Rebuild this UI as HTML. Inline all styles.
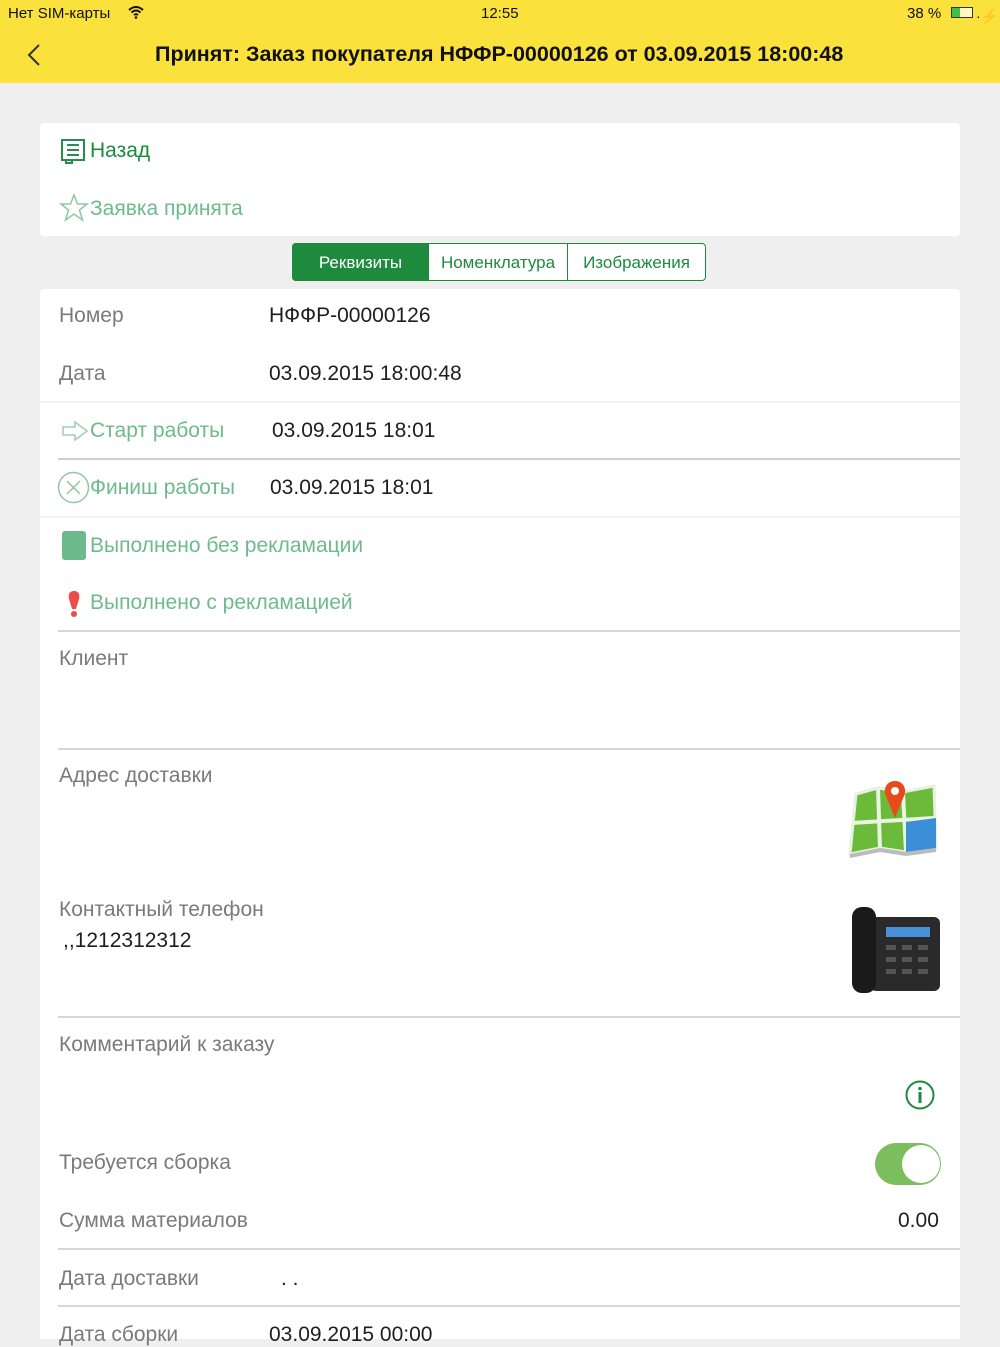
<!DOCTYPE html>
<html><head><meta charset="utf-8"><style>
*{margin:0;padding:0;box-sizing:border-box}
body{width:1000px;height:1334px;overflow:hidden;background:#efefef;font-family:"Liberation Sans","Noto Sans CJK SC",sans-serif;position:relative}
.a{position:absolute;white-space:nowrap;font-size:21px;line-height:24px}
.l{color:#7a7a7a}
.v{color:#1e1e1e}
.g{color:#6dbb8c}
.ln{position:absolute;left:58px;width:902px;height:2px;background:#d6d6d6}
</style></head><body>
<div style="position:absolute;left:0;top:0;width:1000px;height:83px;background:#fbe13c"></div>
<div class="a" style="left:8px;top:4px;font-size:15px;line-height:20px;color:#111">Нет SIM-карты</div>
<svg style="position:absolute;left:128px;top:6px" width="16" height="13" viewBox="0 0 16 13"><path d="M1 4Q8 -2 15 4M3.5 6.5Q8 2.5 12.5 6.5M6 9Q8 7.5 10 9" stroke="#111" stroke-width="2" fill="none"/><circle cx="8" cy="11.5" r="1.3" fill="#111"/></svg>
<div class="a" style="left:481px;top:4px;font-size:15px;line-height:20px;color:#111">12:55</div>
<div class="a" style="left:907px;top:4px;font-size:15px;line-height:20px;color:#111">38 %</div>
<div style="position:absolute;left:951px;top:7px;width:22px;height:11px;border:1px solid #333;background:#fff8c0"><div style="width:8px;height:9px;background:#3cc04a"></div></div>
<div class="a" style="left:976px;top:4px;font-size:14px;color:#111">·⚡</div>
<svg style="position:absolute;left:27px;top:44px" width="14" height="22" viewBox="0 0 14 22"><path d="M12 1L2 11L12 21" stroke="#333" stroke-width="2" fill="none"/></svg>
<div class="a" style="left:155px;top:42px;font-size:21.5px;font-weight:bold;color:#111">Принят: Заказ покупателя НФФР-00000126 от 03.09.2015 18:00:48</div>

<div style="position:absolute;left:40px;top:123px;width:920px;height:113px;background:#fff;border-radius:4px"></div>
<svg style="position:absolute;left:60px;top:138px" width="26" height="26" viewBox="0 0 26 26"><rect x="2" y="2" width="22" height="20" fill="none" stroke="#2f8a52" stroke-width="2"/><path d="M7 7h12M7 12h12M7 17h12M6 22v3h6v-3" stroke="#2f8a52" stroke-width="2" fill="none"/></svg>
<div class="a" style="left:90px;top:139px;color:#1d8a3e">Назад</div>
<svg style="position:absolute;left:59px;top:193px" width="30" height="30" viewBox="0 0 30 30"><path d="M15 2L18.5 11H28L20.5 17L23.5 27L15 21L6.5 27L9.5 17L2 11H11.5Z" fill="none" stroke="#8fc7a4" stroke-width="1.5"/></svg>
<div class="a g" style="left:90px;top:197px">Заявка принята</div>

<div style="position:absolute;left:292px;top:243px;width:414px;height:38px;border:1px solid #1d8a3e;border-radius:4px;background:#fff"></div>
<div style="position:absolute;left:292px;top:243px;width:137px;height:38px;background:#1d8a3e;border-radius:4px 0 0 4px"></div>
<div style="position:absolute;left:567px;top:243px;width:1px;height:38px;background:#1d8a3e"></div>
<div class="a" style="left:292px;width:137px;text-align:center;top:251px;font-size:17px;color:#fff">Реквизиты</div>
<div class="a" style="left:429px;width:138px;text-align:center;top:251px;font-size:17px;color:#1d8a3e">Номенклатура</div>
<div class="a" style="left:567px;width:139px;text-align:center;top:251px;font-size:17px;color:#1d8a3e">Изображения</div>

<div style="position:absolute;left:40px;top:289px;width:920px;height:1050px;background:#fff;border-radius:4px 4px 0 0"></div>
<div style="position:absolute;left:40px;top:401px;width:920px;height:2px;background:#f2f2f2"></div>
<div class="a l" style="left:59px;top:304px">Номер</div>
<div class="a v" style="left:269px;top:304px">НФФР-00000126</div>
<div class="a l" style="left:59px;top:362px">Дата</div>
<div class="a v" style="left:269px;top:362px">03.09.2015 18:00:48</div>

<svg style="position:absolute;left:61px;top:420px" width="28" height="22" viewBox="0 0 28 22"><path d="M2 7H14V2L26 11L14 20V15H2Z" fill="none" stroke="#9fd0b0" stroke-width="1.5"/></svg>
<div class="a g" style="left:90px;top:419px">Старт работы</div>
<div class="a v" style="left:272px;top:419px">03.09.2015 18:01</div>
<div class="ln" style="top:458px;background:#cfcfcf"></div>
<svg style="position:absolute;left:57px;top:471px" width="33" height="33" viewBox="0 0 33 33"><circle cx="16.5" cy="16.5" r="15" fill="none" stroke="#8fc7a4" stroke-width="1.5"/><path d="M10 10L23 23M23 10L10 23" stroke="#8fc7a4" stroke-width="1.5"/></svg>
<div class="a g" style="left:90px;top:476px">Финиш работы</div>
<div class="a v" style="left:270px;top:476px">03.09.2015 18:01</div>
<div style="position:absolute;left:40px;top:516px;width:920px;height:2px;background:#f4f4f4"></div>

<div style="position:absolute;left:62px;top:531px;width:24px;height:29px;background:#6dbb8c;border-radius:3px"></div>
<div class="a g" style="left:90px;top:534px">Выполнено без рекламации</div>
<svg style="position:absolute;left:66px;top:590px" width="16" height="28" viewBox="0 0 16 28"><path d="M8 1C3 1 2 5 3 9L6 19H10L13 9C14 5 13 1 8 1Z" fill="#ee4b4b"/><circle cx="8" cy="24" r="3" fill="#ee4b4b"/></svg>
<div class="a g" style="left:90px;top:591px">Выполнено с рекламацией</div>
<div class="ln" style="top:630px"></div>
<div class="a l" style="left:59px;top:647px">Клиент</div>
<div class="ln" style="top:748px"></div>
<div class="a l" style="left:59px;top:764px">Адрес доставки</div>
<svg style="position:absolute;left:848px;top:778px" width="90" height="80" viewBox="0 0 90 80"><path d="M8 16L30 10L55 14L86 8L88 70L58 74L32 70L2 76Z" fill="#6cba3a" stroke="#e8f0e0" stroke-width="3"/><path d="M30 10L32 70M55 14L58 74M4 45L86 40" stroke="#e8f5e0" stroke-width="4"/><path d="M58 44L88 40L88 70L58 74Z" fill="#3a8fd8"/><path d="M47 3C38 3 35 12 38 18L47 40L56 18C59 12 56 3 47 3Z" fill="#e84a1c"/><circle cx="47" cy="13" r="4" fill="#fff"/><path d="M2 76L32 70L58 74L88 70L88 74L58 78L32 74L2 80Z" fill="#bbb"/></svg>
<div class="a l" style="left:59px;top:898px">Контактный телефон</div>
<div class="a v" style="left:63px;top:929px">,,1212312312</div>
<svg style="position:absolute;left:850px;top:905px" width="92" height="90" viewBox="0 0 92 90"><rect x="20" y="12" width="70" height="74" rx="6" fill="#2a2a2a"/><rect x="2" y="2" width="24" height="86" rx="10" fill="#1a1a1a"/><rect x="36" y="22" width="44" height="10" fill="#4a90d8"/><g fill="#555"><rect x="36" y="40" width="10" height="5"/><rect x="52" y="40" width="10" height="5"/><rect x="68" y="40" width="10" height="5"/><rect x="36" y="52" width="10" height="5"/><rect x="52" y="52" width="10" height="5"/><rect x="68" y="52" width="10" height="5"/><rect x="36" y="64" width="10" height="5"/><rect x="52" y="64" width="10" height="5"/><rect x="68" y="64" width="10" height="5"/></g></svg>
<div class="ln" style="top:1016px"></div>
<div class="a l" style="left:59px;top:1033px">Комментарий к заказу</div>
<svg style="position:absolute;left:905px;top:1080px" width="30" height="30" viewBox="0 0 30 30"><circle cx="15" cy="15" r="13.5" fill="none" stroke="#1d8a3e" stroke-width="2"/><circle cx="15" cy="8.5" r="1.8" fill="#1d8a3e"/><path d="M15 12V23" stroke="#1d8a3e" stroke-width="3"/></svg>
<div class="a l" style="left:59px;top:1151px">Требуется сборка</div>
<div style="position:absolute;left:875px;top:1143px;width:66px;height:42px;border-radius:21px;background:#7cbd5e"></div>
<div style="position:absolute;left:902px;top:1145px;width:38px;height:38px;border-radius:50%;background:#fff"></div>
<div class="a l" style="left:59px;top:1209px">Сумма материалов</div>
<div class="a v" style="left:898px;top:1209px">0.00</div>
<div class="ln" style="top:1248px"></div>
<div class="a l" style="left:59px;top:1267px">Дата доставки</div>
<div class="a v" style="left:281px;top:1267px">. .</div>
<div class="ln" style="top:1305px"></div>
<div class="a l" style="left:59px;top:1323px">Дата сборки</div>
<div class="a v" style="left:269px;top:1323px">03.09.2015 00:00</div>
</body></html>
